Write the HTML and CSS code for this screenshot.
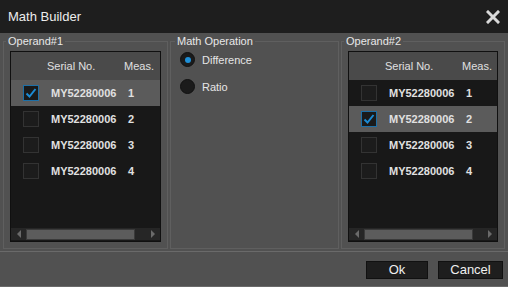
FILE: index.html
```html
<!DOCTYPE html>
<html lang="en">
<head>
    <meta charset="UTF-8">
    <title>Math Builder</title>
    <link rel="stylesheet" href="styles.css">
</head>
<body>
<div class="dialog">
    <div class="titlebar">
        <span class="title">Math Builder</span>
        <svg class="close" width="14" height="14" viewBox="0 0 14 14">
            <path d="M2 2 L12 12 M12 2 L2 12" stroke="#d9d9d9" stroke-width="3" stroke-linecap="square"/>
        </svg>
    </div>

    <div class="panels">
        <fieldset class="group operand">
            <legend>Operand#1</legend>
            <div class="list">
                <div class="head"><span class="c-serial">Serial No.</span><span>Meas.</span></div>
                <div class="row selected"><span class="check on"><svg width="12" height="12" viewBox="0 0 12 12"><path d="M1.5 6.5 L4.5 9.5 L10.5 2" fill="none" stroke="#1b8bd4" stroke-width="2"/></svg></span><span class="c-serial">MY52280006</span><span>1</span></div>
                <div class="row"><span class="check"></span><span class="c-serial">MY52280006</span><span>2</span></div>
                <div class="row"><span class="check"></span><span class="c-serial">MY52280006</span><span>3</span></div>
                <div class="row"><span class="check"></span><span class="c-serial">MY52280006</span><span>4</span></div>
                <div class="scrollbar">
                    <span class="arrow left"></span><span class="thumb"></span><span class="arrow right"></span>
                </div>
            </div>
        </fieldset>

        <fieldset class="group operation">
            <legend>Math Operation</legend>
            <div class="radio-row"><span class="radio on"></span>Difference</div>
            <div class="radio-row"><span class="radio"></span>Ratio</div>
        </fieldset>

        <fieldset class="group operand second">
            <legend>Operand#2</legend>
            <div class="list">
                <div class="head"><span class="c-serial">Serial No.</span><span>Meas.</span></div>
                <div class="row"><span class="check"></span><span class="c-serial">MY52280006</span><span>1</span></div>
                <div class="row selected"><span class="check on"><svg width="12" height="12" viewBox="0 0 12 12"><path d="M1.5 6.5 L4.5 9.5 L10.5 2" fill="none" stroke="#1b8bd4" stroke-width="2"/></svg></span><span class="c-serial">MY52280006</span><span>2</span></div>
                <div class="row"><span class="check"></span><span class="c-serial">MY52280006</span><span>3</span></div>
                <div class="row"><span class="check"></span><span class="c-serial">MY52280006</span><span>4</span></div>
                <div class="scrollbar">
                    <span class="arrow left"></span><span class="thumb"></span><span class="arrow right"></span>
                </div>
            </div>
        </fieldset>
    </div>

    <div class="footer">
        <button class="btn ok">Ok</button>
        <button class="btn">Cancel</button>
    </div>
</div>
</body>
</html>
```

FILE: styles.css
```css
body {
    margin: 0;
    font-family: "Liberation Sans", Arial, sans-serif;
    color: #e6e6e6;
    background: #515151;
}
.dialog {
    width: 508px;
    height: 287px;
    background: #515151;
    display: flex;
    flex-direction: column;
    overflow: hidden;
}
.titlebar {
    height: 33px;
    flex: none;
    background: #1e1e1e;
    display: flex;
    align-items: center;
    justify-content: space-between;
    padding: 0 8px 0 8px;
    box-sizing: border-box;
}
.title {
    font-size: 13px;
    color: #ececec;
}
.panels {
    flex: 1;
    display: flex;
    gap: 2px;
    padding: 2px 3px 0 3px;
    min-height: 0;
}
.group {
    margin: 0 0 2px 0;
    padding: 0 6px 6px 6px;
    border: 1px solid #5f5f5f;
    min-width: 0;
    box-sizing: border-box;
}
.group legend {
    font-size: 11px;
    line-height: 13px;
    padding: 0 2px;
    margin-left: -4px;
    color: #e8e8e8;
}
.operand {
    width: 165px;
    display: flex;
    flex-direction: column;
}
.operand.second {
    width: 164px;
}
.operation {
    width: 169px;
}
.operation legend {
    margin-left: -2px;
}
.list {
    flex: 1;
    margin-top: 3px;
    background: #181818;
    border: 1px solid #101010;
    display: flex;
    flex-direction: column;
    font-size: 11px;
}
.head {
    height: 28px;
    flex: none;
    background: #4a4a4a;
    display: flex;
    align-items: center;
    padding-left: 36px;
    color: #e0e0e0;
}
.c-serial {
    width: 77px;
    flex: none;
}
.row {
    height: 26px;
    flex: none;
    display: flex;
    align-items: center;
    padding-left: 12px;
    font-weight: bold;
    color: #e0e0e0;
}
.row.selected {
    background: #5b5b5b;
}
.check {
    width: 14px;
    height: 14px;
    border: 1px solid #333;
    background: #1c1c1c;
    margin-right: 12px;
    display: flex;
    align-items: center;
    justify-content: center;
    flex: none;
}
.check.on {
    border-color: #1d6fa6;
    background: #1a1a1a;
}
.scrollbar {
    margin-top: auto;
    margin-bottom: 1px;
    height: 12px;
    background: #262626;
    display: flex;
    align-items: center;
    flex: none;
}
.arrow {
    width: 15px;
    height: 12px;
    display: flex;
    align-items: center;
    justify-content: center;
    flex: none;
}
.arrow::before {
    content: "";
    border-top: 4px solid transparent;
    border-bottom: 4px solid transparent;
}
.arrow.left::before {
    border-right: 4px solid #6a6a6a;
}
.arrow.right {
    margin-left: auto;
}
.arrow.right::before {
    border-left: 4px solid #6a6a6a;
}
.thumb {
    width: 107px;
    height: 9px;
    background: #5c5c5c;
    border: 1px solid #3a3a3a;
}
.radio-row {
    height: 27px;
    display: flex;
    align-items: center;
    font-size: 11px;
    padding-left: 3px;
}
.operation .radio-row:first-of-type {
    margin-top: -2px;
}
.radio {
    width: 13px;
    height: 13px;
    border-radius: 50%;
    background: #1b1b1b;
    border: 1px solid #111;
    margin-right: 7px;
    display: flex;
    align-items: center;
    justify-content: center;
    flex: none;
}
.radio.on::before {
    content: "";
    width: 6px;
    height: 6px;
    border-radius: 50%;
    background: #1e90d8;
}
.footer {
    height: 36px;
    flex: none;
    border-top: 1px solid #6a6a6a;
    border-bottom: 1px solid #6a6a6a;
    box-sizing: border-box;
    display: flex;
    justify-content: flex-end;
    align-items: flex-start;
    gap: 10px;
    padding: 9px 5px 0 0;
}
.btn {
    height: 18px;
    width: 65px;
    background: #1e1e1e;
    border: 1px solid #111;
    color: #f0f0f0;
    font-family: "Liberation Sans", Arial, sans-serif;
    font-size: 13px;
    padding: 0;
    line-height: 16px;
}
.btn.ok {
    width: 62px;
}
```
